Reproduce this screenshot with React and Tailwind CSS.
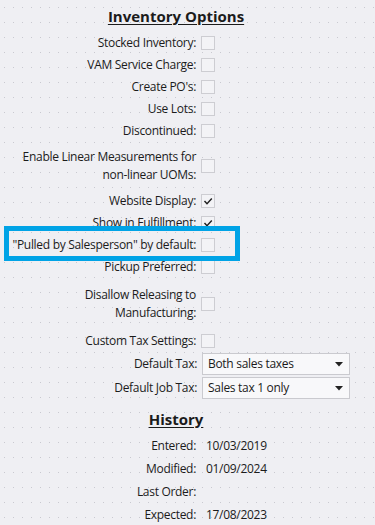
import React from "react";

function Box({ checked }) {
  return (
    <div className="w-[14px] h-[14px] border border-[#cdcdd2] bg-[#f3f3f6] flex items-center justify-center shrink-0">
      {checked && (
        <svg width="12" height="12" viewBox="0 0 12 12">
          <polyline points="2.5,6 5,8.8 9.8,3.5" fill="none" stroke="#1f1f1f" strokeWidth="1.4" />
        </svg>
      )}
    </div>
  );
}

function Row({ label, checked, h = "h-[22px]" }) {
  return (
    <div className={`flex items-center ${h}`}>
      <div className="w-[197px] text-right leading-[18px] pr-[1px]">{label}</div>
      <div className="ml-[4px]">
        <Box checked={checked} />
      </div>
    </div>
  );
}

function Select({ value }) {
  return (
    <div className="w-[148px] h-[22px] border border-[#cacacf] bg-[#f8f8fa] flex items-center justify-between pl-[5px] pr-[6px]">
      <span>{value}</span>
      <svg width="8" height="5" viewBox="0 0 8 5">
        <polygon points="0,0 8,0 4,4.5" fill="#222" />
      </svg>
    </div>
  );
}

function SelRow({ label, value }) {
  return (
    <div className="flex items-center h-[24px]">
      <div className="w-[197px] text-right">{label}</div>
      <div className="ml-[5px]">
        <Select value={value} />
      </div>
    </div>
  );
}

function HistRow({ label, value }) {
  return (
    <div className="flex items-center h-[23px]">
      <div className="w-[196px] text-right">{label}</div>
      <div className="ml-[10px]">{value}</div>
    </div>
  );
}

export default function App() {
  return (
    <div
      className="relative w-[375px] h-[525px] overflow-hidden bg-[#efeff3] bg-[image:radial-gradient(circle,#c9c9d0_0.6px,transparent_0.9px)] bg-[size:9px_15px] text-[#1b1b1b] text-[12px] font-['Open_Sans',sans-serif]"
    >
      <div className="pt-[5px]">
        <div className="w-[352px] text-center text-[15px] font-bold underline underline-offset-2 leading-[22px]">
          Inventory Options
        </div>
        <div className="mt-[5px] tracking-[-0.3px]">
          <Row label="Stocked Inventory:" />
          <Row label="VAM Service Charge:" />
          <Row label="Create PO's:" />
          <Row label="Use Lots:" />
          <Row label="Discontinued:" />
          <Row
            h="h-[48px]"
            label={
              <>
                Enable Linear Measurements for
                <br />
                non-linear UOMs:
              </>
            }
          />
          <Row label="Website Display:" checked />
          <Row label="Show in Fulfillment:" checked />
          <Row label={'"Pulled by Salesperson" by default:'} />
          <Row label="Pickup Preferred:" />
          <Row
            h="h-[52px]"
            label={
              <>
                Disallow Releasing to
                <br />
                Manufacturing:
              </>
            }
          />
          <Row label="Custom Tax Settings:" />
          <SelRow label="Default Tax:" value="Both sales taxes" />
          <SelRow label="Default Job Tax:" value="Sales tax 1 only" />
        </div>
        <div className="mt-[8px] w-[352px] text-center text-[15px] font-bold underline underline-offset-2 leading-[22px]">
          History
        </div>
        <div className="mt-[4px] tracking-[-0.3px]">
          <HistRow label="Entered:" value="10/03/2019" />
          <HistRow label="Modified:" value="01/09/2024" />
          <HistRow label="Last Order:" value="" />
          <HistRow label="Expected:" value="17/08/2023" />
        </div>
      </div>
      <div className="absolute left-[4px] top-[226px] w-[236px] h-[35px] border-[5px] border-[#00a3e6]" />
    </div>
  );
}
